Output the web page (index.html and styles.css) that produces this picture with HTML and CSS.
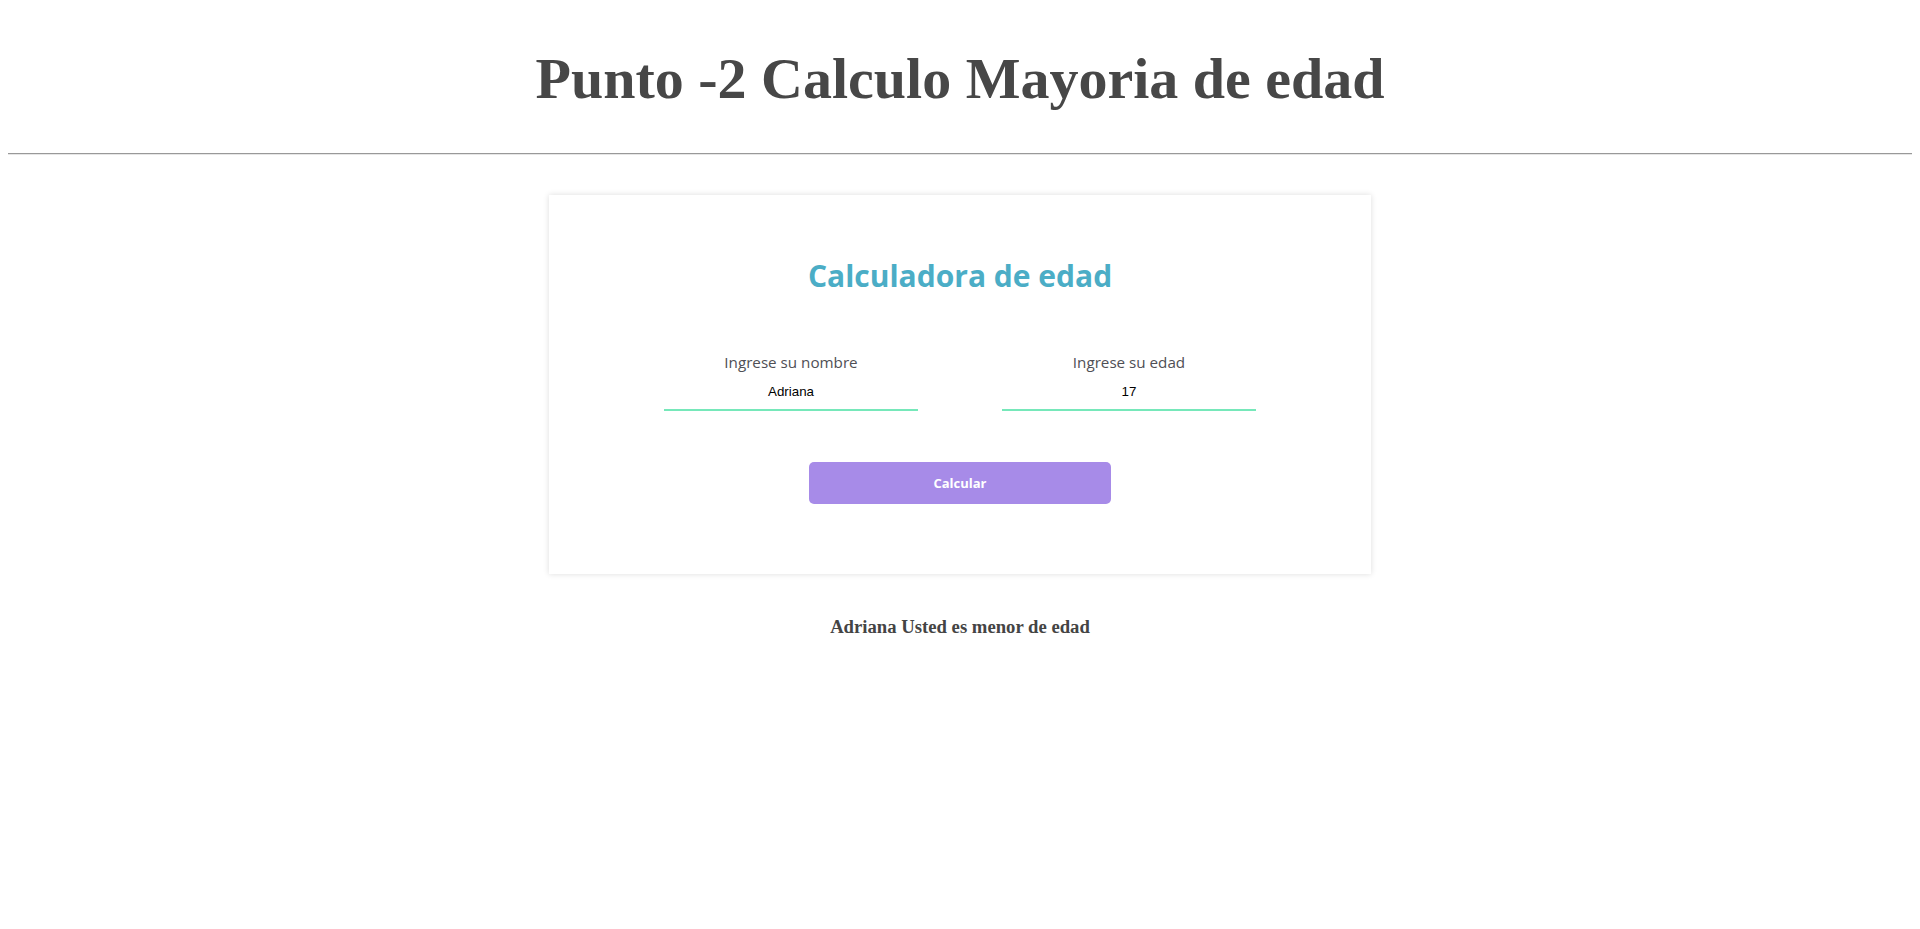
FILE: index.html
```html
<!DOCTYPE html>
<html lang="es">
<head>
<meta charset="utf-8">
<title>Punto 2</title>
<link rel="stylesheet" href="styles.css">
</head>
<body>
<h1 class="page-title">Punto -2 Calculo Mayoria de edad</h1>
<hr class="divider">
<main class="card">
  <h2 class="card-title">Calculadora de edad</h2>
  <div class="fields">
    <div class="field">
      <label class="field-label" for="nombre">Ingrese su nombre</label>
      <input class="field-input" id="nombre" type="text" value="Adriana">
    </div>
    <div class="field">
      <label class="field-label" for="edad">Ingrese su edad</label>
      <input class="field-input" id="edad" type="text" value="17">
    </div>
  </div>
  <button class="btn" type="button">Calcular</button>
</main>
<h4 class="result">Adriana Usted es menor de edad</h4>
</body>
</html>
```
FILE: styles.css
```css
body {
  margin: 8px;
  font-family: "Liberation Serif", "Times New Roman", serif;
  color: #444;
  background: #fff;
}
.page-title {
  margin: 38px 0 42px;
  text-align: center;
  font-size: 58px;
  line-height: 65px;
  font-weight: bold;
  color: #474747;
}
.divider {
  margin: 0;
  border: 0;
  border-top: 1px solid #999;
  border-bottom: 1px solid #e6e6e6;
  height: 0;
}
.card {
  width: 822px;
  height: 379px;
  margin: 40px auto 0;
  box-sizing: border-box;
  background: #fff;
  box-shadow: 0 0 6px rgba(0, 0, 0, 0.14);
  display: flex;
  flex-direction: column;
  align-items: center;
  padding-top: 61px;
  font-family: "Open Sans", "Noto Sans", sans-serif;
}
.card-title {
  margin: 0;
  font-size: 30px;
  line-height: 40px;
  font-weight: 700;
  color: #4badc6;
}
.fields {
  display: flex;
  gap: 84px;
  margin-top: 56px;
}
.field {
  display: flex;
  flex-direction: column;
  align-items: center;
  width: 254px;
}
.field-label {
  font-size: 15.2px;
  line-height: 20px;
  color: #4f4f55;
  font-weight: 400;
}
.field-input {
  width: 254px;
  box-sizing: border-box;
  margin-top: 9px;
  padding: 3px 0 10px;
  border: 0;
  border-bottom: 2px solid #76e8ba;
  outline: none;
  text-align: center;
  font-family: "Liberation Sans", Arial, sans-serif;
  font-size: 13.33px;
  color: #000;
  background: transparent;
}
.btn {
  margin-top: 51px;
  width: 302px;
  height: 42px;
  border: 0;
  border-radius: 5px;
  background: #a78be8;
  color: #fff;
  font-family: "Open Sans", "Noto Sans", sans-serif;
  font-weight: 700;
  font-size: 13px;
}
.result {
  margin: 42px 0 0;
  text-align: center;
  font-size: 18.7px;
  font-weight: bold;
  color: #444;
}
```
